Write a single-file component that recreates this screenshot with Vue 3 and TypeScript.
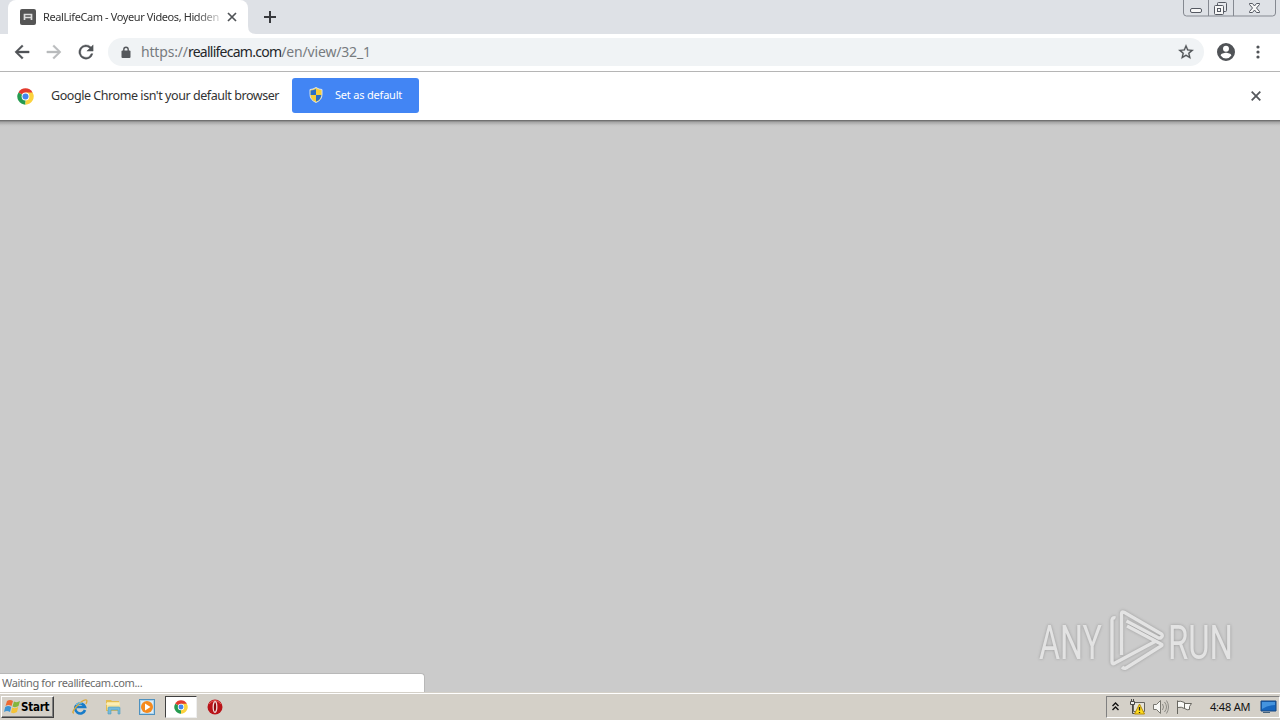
<script setup lang="ts">
const pageUrl = { scheme: 'https://', host: 'reallifecam.com', path: '/en/view/32_1' }
const tabTitle = 'RealLifeCam - Voyeur Videos, Hidden'
</script>

<template>
  <div class="desktop">
    <header class="tabstrip">
      <div class="tab">
        <svg class="favicon" width="16" height="16" viewBox="0 0 16 16"><rect width="16" height="16" rx="2" fill="#555"/><path d="M4.500 11V5.500h7V11M4.500 8.500h7" fill="none" stroke="#ddd" stroke-width="1.700"/></svg>
        <span class="title">{{ tabTitle }}</span>
        <svg width="10" height="10" viewBox="0 0 10 10"><path d="M1 1l8 8M9 1L1 9" stroke="#505357" stroke-width="1.700"/></svg>
      </div>
      <svg class="corner" width="8" height="8"><path d="M0 0Q0 8 8 8H0z" fill="#fff"/></svg>
      <svg class="plus" width="12" height="12"><path d="M6 0v12M0 6h12" stroke="#37393d" stroke-width="2"/></svg>
      <svg class="controls" width="94" height="17" viewBox="0 0 94 17" fill="none">
        <path d="M.5 0v13q0 3 3 3h86q3 0 3-3V0M25.500 0v16M50.500 0v16" stroke="#858991"/>
        <g stroke="#555962"><rect x="7.500" y="8.500" width="11" height="4" rx="1.500" fill="#f7f7f7"/><rect x="34.500" y="2.500" width="9" height="9" rx="1" fill="#e6e8ec"/><rect x="31.500" y="5.500" width="9" height="9" rx="1" fill="#f7f7f7"/><rect x="34.500" y="8.500" width="3" height="3"/><path d="M66.500 3.500h3l2 2.500 2-2.500h3v1L73.500 8l3 3.500v1h-3l-2-2.500-2 2.500h-3v-1l3-3.500-3-3.500z" fill="#f7f7f7"/></g>
      </svg>
    </header>

    <nav class="toolbar">
      <svg class="back" width="16" height="16" viewBox="3 3 18 18"><path d="M20 11H7.800l5.600-5.600L12 4l-8 8 8 8 1.400-1.400L7.800 13H20z" fill="#505357" stroke="#505357" stroke-width=".5"/></svg>
      <svg class="forward" width="16" height="16" viewBox="3 3 18 18"><path d="M12 4l-1.400 1.400 5.600 5.600H4v2h12.200l-5.600 5.600L12 20l8-8z" fill="#b9bbbd" stroke="#b9bbbd" stroke-width=".5"/></svg>
      <svg class="reload" width="16" height="16" viewBox="3 3 18 18"><path d="M17.650 6.350A8 8 0 1 0 19.730 14h-2.080A6 6 0 1 1 12 6c1.660 0 3.140.690 4.220 1.780L13 11h7V4z" fill="#505357" stroke="#505357" stroke-width=".5"/></svg>
      <div class="omnibox">
        <svg class="lock" width="10" height="13" viewBox="0 0 10 13"><rect x=".5" y="4.500" width="9" height="7.500" rx="1" fill="#55585c"/><path d="M2.800 5V3.500a2.200 2.200 0 0 1 4.400 0V5" fill="none" stroke="#55585c" stroke-width="1.400"/></svg>
        <span class="url">{{ pageUrl.scheme }}<b>{{ pageUrl.host }}</b>{{ pageUrl.path }}</span>
        <svg class="star" width="16" height="16" viewBox="1.500 1.500 21 21"><path d="M22 9.240l-7.190-.620L12 2 9.190 8.630 2 9.240l5.460 4.730L5.820 21 12 17.270 18.180 21l-1.630-7.030zM12 15.400l-3.760 2.270 1-4.280-3.320-2.880 4.380-.380L12 6.100l1.710 4.040 4.380.380-3.320 2.880 1 4.280z" fill="#505357" stroke="#505357" stroke-width=".3"/></svg>
      </div>
      <svg class="person" width="18" height="18" viewBox="2 2 20 20"><path d="M12 2a10 10 0 1 0 0 20 10 10 0 0 0 0-20zm0 3a3.300 3.300 0 1 1 0 6.600A3.300 3.300 0 0 1 12 5zm0 14.200a7.200 7.200 0 0 1-6-3.220c.030-1.990 4-3.080 6-3.080s5.970 1.090 6 3.080a7.200 7.200 0 0 1-6 3.220z" fill="#505357"/></svg>
      <svg class="dots" width="4" height="14"><g fill="#505357"><circle cx="2" cy="2" r="1.600"/><circle cx="2" cy="7" r="1.600"/><circle cx="2" cy="12" r="1.600"/></g></svg>
    </nav>

    <section class="infobar">
      <svg class="chrome" width="17" height="17" viewBox="0 0 48 48"><path d="M24 24L4.080 12.500A23 23 0 0 1 43.920 12.500z" fill="#e33b2e"/><path d="M24 24v23A23 23 0 0 1 4.080 12.500z" fill="#269b50"/><path d="M24 24l19.920-11.500A23 23 0 0 1 24 47z" fill="#fcd23d"/><path d="M24 13h20L34 30 24 47l8-18z" fill="#fcd23d"/><path d="M4 12.500L14 30l10 4-3 12.500z" fill="#269b50"/><circle cx="24" cy="24" r="11" fill="#fff"/><circle cx="24" cy="24" r="8.500" fill="#4385ee"/></svg>
      <span class="notice">Google Chrome isn't your default browser</span>
      <button class="default-btn">
        <svg width="14" height="16" viewBox="0 0 14 16"><path d="M7 .5Q4 2.500 1 2.500v5Q1 13 7 15.500 13 13 13 7.500v-5Q10 2.500 7 .5z" fill="#f7ce38" stroke="#d7e2ec" stroke-width="1"/><path d="M7 2v6H1.600V3.400Q5 3.200 7 2zM7 8h5.300Q12 12.500 7 14.600z" fill="#2b6fc4"/></svg>
        <span>Set as default</span>
      </button>
      <svg class="dismiss" width="10" height="10" viewBox="0 0 10 10"><path d="M.7.7l8.600 8.600M9.300.7L.7 9.300" stroke="#55585c" stroke-width="1.800"/></svg>
    </section>

    <main class="page">
      <div class="status">Waiting for reallifecam.com...</div>
      <svg class="watermark" width="204" height="66" viewBox="1036 606 204 66" fill="none">
        <g class="wordmark">
          <text x="1039" y="659" textLength="63" lengthAdjust="spacingAndGlyphs">ANY</text>
          <text x="1168" y="659" textLength="65" lengthAdjust="spacingAndGlyphs">RUN</text>
        </g>
        <g class="emblem">
          <path d="M1115.500 618q-3-1-3.500 2v42q0 3 3 1l41-22M1121.500 655v-41q0-3 3-1.500l37 21.500q2 2-1 4h-2l-32-17M1127 626l34 18q2 1 0 2l-35 22q-2 1-4-1"/>
        </g>
      </svg>
    </main>

    <footer class="taskbar">
      <div class="start">
        <svg width="17" height="16" viewBox="0 0 17 16"><path d="M3 2q3-2 6 0L7.500 7q-3-2-6 0z" fill="#ed6a32"/><path d="M10 2.500q3 1.500 6-.5l-1.500 5q-3 2-6 .5z" fill="#83b63e"/><path d="M1.200 8q3-2 6 0L6 13q-3-2-6 0z" fill="#3d94d3"/><path d="M8.200 8.500q3 1.500 6-.5L13 13q-3 2-6 .5z" fill="#f4c338"/></svg>
        <span>Start</span>
      </div>
      <svg class="ie" width="16" height="16" viewBox="0 0 16 16" fill="none"><path d="M13 11A5 5 0 1 1 13 8H4" stroke="#187cc9" stroke-width="2.600"/><path d="M2 14Q-1 14 4 8 11 0 14.500 1q1 .5-.5 4" stroke="#dba93a" stroke-width="1.300"/><path d="M4 6q2-3 6-2" stroke="#70caf4"/></svg>
      <svg class="folder" width="17" height="16" viewBox="0 0 17 16"><path d="M1 3V1h5l1 1h7v10H1z" fill="#e4bd52"/><path d="M2 3h13v8H2z" fill="#f7e59d"/><path d="M3 15V9q0-1 1-1h10q1 0 1 1v6h-2v-4H6v4z" fill="#76bbdb" stroke="#4f9bbd" stroke-width=".6"/><path d="M1 5h13" stroke="#fff7cf"/></svg>
      <svg class="player" width="16" height="16" viewBox="0 0 16 16"><rect x=".5" y=".5" width="15" height="15" fill="#afd4ec" stroke="#4e91bf"/><rect x="2" y="2" width="12" height="12" fill="#dceefa"/><circle cx="8" cy="8" r="6" fill="#f58a1e"/><path d="M6 4.500L11.500 8 6 11.500z" fill="#fff"/></svg>
      <div class="active-app">
        <svg width="14" height="14" viewBox="0 0 48 48"><path d="M24 24L4.080 12.500A23 23 0 0 1 43.920 12.500z" fill="#e33b2e"/><path d="M24 24v23A23 23 0 0 1 4.080 12.500z" fill="#269b50"/><path d="M24 24l19.920-11.500A23 23 0 0 1 24 47z" fill="#fcd23d"/><path d="M24 13h20L34 30 24 47l8-18z" fill="#fcd23d"/><path d="M4 12.500L14 30l10 4-3 12.500z" fill="#269b50"/><circle cx="24" cy="24" r="11" fill="#fff"/><circle cx="24" cy="24" r="8.500" fill="#4385ee"/></svg>
      </div>
      <svg class="opera" width="16" height="16" viewBox="0 0 16 16"><circle cx="8" cy="8" r="7.500" fill="#b91319"/><path d="M2 5q6-7 12 0" fill="none" stroke="#e95b58"/><ellipse cx="8" cy="8" rx="1.800" ry="5.300" fill="#8d0a0e" stroke="#f3dcdc" stroke-width="1.300"/></svg>
      <div class="tray">
        <svg class="chevrons" width="7" height="9"><path d="M.5 4L3.500 1l3 3M.5 8l3-3 3 3" fill="none" stroke="#111" stroke-width="1.400"/></svg>
        <svg class="network" width="16" height="16" viewBox="0 0 16 16"><path d="M4.500 3.500h11v9h-11z" fill="#e6e3d8" stroke="#65645f"/><path d="M3.500 6v8.500h6" fill="none" stroke="#4a4a47"/><path d="M1.500 2.500h4v3h-4zM2.500 0v3M4.500 0v3" fill="#eee" stroke="#4a4a47"/><path d="M10.500 5l5 10h-10z" fill="#ffdc1b" stroke="#b38b0c"/><path d="M10.500 8v3.500M10.500 13v1" stroke="#222" stroke-width="1.300"/></svg>
        <svg class="volume" width="17" height="16" viewBox="0 0 17 16" fill="none"><path d="M1.500 5.500h3l4-4v13l-4-4h-3z" fill="#f7f7f4" stroke="#77766f"/><path d="M10.500 5q2 3 0 6M12.500 3q4 5 0 10M14.500 1.500q4 6.500 0 13" stroke="#8c8b85"/></svg>
        <svg class="flag" width="16" height="16" viewBox="0 0 16 16"><path d="M1.500 15V1.500M1.500 2.500q3-1 7 1v6q-3-2-7-1M8.500 4.500h7l-2 3v3q-2 1-5-1z" fill="#fafaf7" stroke="#686760"/></svg>
        <span class="clock">4:48 AM</span>
        <svg class="monitor" width="17" height="14" viewBox="0 0 17 14"><path d="M1 1h15v10H1z" fill="#1766be" stroke="#18477e"/><path d="M2 2h13v3Q8 5 2 9z" fill="#4594de"/><path d="M3 12h7v1H3z" fill="#45637d"/></svg>
      </div>
    </footer>
  </div>
</template>

<style>
html, body { margin: 0; overflow: hidden; }
</style>

<style scoped>
* { box-sizing: border-box; }
svg { flex: none; display: block; }
.desktop { width: 1280px; height: 720px; display: flex; flex-direction: column; font-family: "Noto Sans", sans-serif; font-size: 11px; color: #333; overflow: hidden; }
.desktop span, .status { white-space: nowrap; }
.tabstrip { height: 34px; background: #dee1e6; display: flex; align-items: flex-start; flex: none; }
.tab { width: 240px; height: 34px; margin-left: 8px; padding: 0 11px 0 12px; background: #fff; border-radius: 8px 8px 0 0; display: flex; align-items: center; }
.title { width: 177px; margin-left: 7px; margin-right: 7px; line-height: 18px; letter-spacing: -.4px; -webkit-mask-image: linear-gradient(90deg, #000 86%, #0003); }
.corner { margin-top: 26px; }
.plus { margin: 11px 0 0 8px; }
.controls { margin-left: auto; margin-right: 3px; }
.toolbar { height: 38px; flex: none; background: #fff; border-bottom: 1px solid #b5b5b5; display: flex; align-items: center; padding: 0 0 1px 14px; }
.forward, .reload { margin-left: 16px; }
.omnibox { height: 28px; width: 1096px; margin-left: 14px; border-radius: 14px; background: #f0f3f5; display: flex; align-items: center; padding: 0 10px 0 13px; }
.url { margin-left: 10px; font-size: 14px; line-height: 20px; color: #777b7f; letter-spacing: -.17px; }
.url b { font-weight: 400; color: #24272a; letter-spacing: -.74px; }
.star { margin-left: auto; }
.person { margin-left: 13px; }
.dots { margin-left: 21px; }
.infobar { height: 48px; flex: none; background: #fff; display: flex; align-items: center; padding-left: 17px; }
.notice { width: 241px; margin-left: 17px; font-size: 12.500px; line-height: 18px; letter-spacing: -.44px; color: #333; }
.default-btn { width: 127px; height: 35px; border: 0; border-radius: 3px; background: #4285f4; color: #fff; font: 11px/16px "Noto Sans", sans-serif; letter-spacing: -.2px; display: flex; align-items: center; padding: 0 0 2px 17px; gap: 12px; margin-top: -1px; }
.dismiss { margin-left: auto; margin-right: 19px; }
.page { flex: 1; min-height: 0; background: linear-gradient(#656565 0, #7d7d7d 1px, #a5a5a5 2px, #b8b8b8 4px, #c5c5c5 5px, #cbcbcb 7px); display: flex; align-items: flex-end; justify-content: space-between; }
.status { width: 425px; height: 19px; background: #fff; border: 1px solid #b8b8b8; border-left: 0; border-bottom: 0; border-radius: 0 4px 0 0; color: #6b6b6b; line-height: 18px; padding-left: 2px; letter-spacing: -.36px; }
.watermark { margin: 0 40px 20px 0; overflow: visible; filter: drop-shadow(0 0 1.500px #999); }
.wordmark { font-family: Roboto, sans-serif; font-size: 49px; fill: #e3e3e3; }
.emblem { stroke: #e3e3e3; stroke-width: 3.400; stroke-linejoin: round; }
.taskbar { height: 28px; flex: none; background: #d4d0c8; border-top: 1px solid #d4d0c8; box-shadow: inset 0 1px #fff; display: flex; align-items: center; }
.start { width: 53px; height: 22px; margin-left: 1px; background: #d4d0c8; border: 1px solid; border-color: #fff #404040 #404040 #fff; box-shadow: inset -1px -1px #808080; display: flex; align-items: center; padding-left: 2px; color: #000; font: bold 11.500px "DejaVu Sans Condensed", sans-serif; }
.start span { letter-spacing: -.25px; }
.ie { margin-left: 18px; }
.folder { margin-left: 17px; }
.player { margin-left: 17px; }
.active-app { width: 32px; height: 22px; margin-left: 10px; background: #fff; border: 1px solid; border-color: #404040 #eee #eee #404040; display: flex; align-items: center; justify-content: center; }
.opera { margin-left: 10px; }
.tray { width: 174px; height: 22px; margin-left: auto; border: 1px solid; border-color: #808080 #fff #fff #808080; display: flex; align-items: center; padding-left: 5px; color: #111; }
.network { margin-left: 10px; }
.volume { margin-left: 7px; }
.flag { margin-left: 7px; }
.clock { width: 50px; margin-left: 18px; letter-spacing: -.2px; }
</style>
